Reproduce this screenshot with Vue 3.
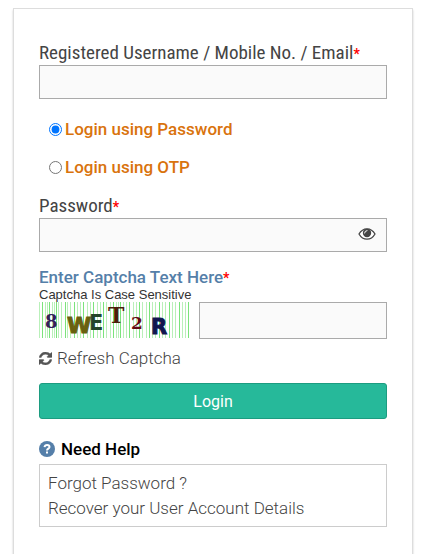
<script setup>
import { ref } from 'vue';

const usuario = ref('');
const modo = ref('password');
const clave = ref('');
const verClave = ref(false);
const captcha = ref('');

const modos = [
    { valor: 'password', texto: 'Login using Password' },
    { valor: 'otp', texto: 'Login using OTP' }
];

// vertical noise lines behind the captcha letters
const lineas = [
    0, 3, 6, 8, 10, 13, 15, 17, 19, 22, 26, 28, 31, 35, 38, 41, 44, 48, 51, 54, 58, 61, 64, 67, 71, 74,
    77, 79, 81, 84, 87, 90, 94, 97, 100, 103, 107, 110, 113, 116, 120, 123, 126, 130, 133, 136, 140, 143, 146, 149
];

const colorLinea = (index) => {
    return index % 3 === 1 ? '#7be37b' : '#b9f0b9';
};

const refrescar = () => {
    captcha.value = '';
};
</script>

<template>
    <main class="pagina">
        <form class="tarjeta" @submit.prevent>
            <div class="campo">
                <label for="usuario" class="etiqueta">Registered Username / Mobile No. / Email<span class="req">*</span></label>
                <input id="usuario" type="text" class="caja" v-model="usuario">
            </div>

            <div class="modos">
                <label v-for="m in modos" :key="m.valor" class="modo">
                    <input type="radio" name="modo" :value="m.valor" v-model="modo">
                    <span>{{ m.texto }}</span>
                </label>
            </div>

            <div class="campo">
                <label for="clave" class="etiqueta">Password<span class="req">*</span></label>
                <div class="clave">
                    <input id="clave" :type="verClave ? 'text' : 'password'" class="caja" v-model="clave">
                    <button type="button" class="ojo" aria-label="Show password" @click="verClave = !verClave">
                        <svg width="18" height="14" viewBox="0 0 18 14">
                            <path d="M1 7C3 3.500 5.800 1.800 9 1.800S15 3.500 17 7C15 10.500 12.200 12.200 9 12.200S3 10.500 1 7Z" fill="#fff" stroke="#444" stroke-width="1.300" />
                            <circle cx="9" cy="6" r="4.200" fill="#444" />
                            <path d="M6.600 6A2.500 2.500 0 0 1 9 3.600" fill="none" stroke="#fff" stroke-width="1" stroke-linecap="round" />
                        </svg>
                    </button>
                </div>
            </div>

            <div class="captcha">
                <label for="captcha" class="titulo">Enter Captcha Text Here<span class="req">*</span></label>
                <div class="nota">Captcha Is Case Sensitive</div>
                <div class="fila">
                    <svg class="imagen" width="150" height="36" viewBox="0 0 150 36">
                        <rect v-for="(x, index) in lineas" :key="x" :x="x" y="0" width="1" height="36" :fill="colorLinea(index)" />
                        <g font-weight="bold">
                            <text x="6" y="26" font-size="18" font-family="DejaVu Serif, serif" fill="#33205c">8</text>
                            <text x="28" y="31" font-size="22" font-family="DejaVu Sans, sans-serif" fill="#69600f" stroke="#69600f">W</text>
                            <text x="50" y="28" font-size="21" font-family="DejaVu Sans, sans-serif" fill="#24452c">E</text>
                            <text x="69" y="21" font-size="22" font-family="DejaVu Serif, serif" fill="#4c1d0b">T</text>
                            <text x="92" y="27" font-size="17" font-family="DejaVu Serif, serif" fill="#650b12">2</text>
                            <text x="112" y="32" font-size="21" font-family="DejaVu Sans, sans-serif" fill="#11164f" stroke="#11164f">R</text>
                        </g>
                    </svg>
                    <input id="captcha" type="text" class="caja" v-model="captcha">
                </div>
                <a href="#" class="refrescar" @click.prevent="refrescar">
                    <svg width="13" height="13" viewBox="0 0 1536 1536">
                        <path fill="#555" stroke="#555" stroke-width="50" d="M1511 928q0 5-1 7-64 268-268 434.500T764 1536q-146 0-282.500-55T238 1324l-129 129q-19 19-45 19t-45-19-19-45V960q0-26 19-45t45-19h448q26 0 45 19t19 45-19 45l-137 137q71 66 161 102t187 36q134 0 250-65t186-179q11-17 53-117 8-23 30-23h192q13 0 22.500 9.500t9.500 22.500zM1536 128v448q0 26-19 45t-45 19h-448q-26 0-45-19t-19-45 19-45l138-138Q969 256 768 256q-134 0-250 65T332 500q-11 17-53 117-8 23-30 23H50q-13 0-22.500-9.500T18 608v-7q65-268 270-434.500T768 0q146 0 284 55.500T1297 212l130-129q19-19 45-19t45 19 19 45z" />
                    </svg>
                    <span>Refresh Captcha</span>
                </a>
            </div>

            <button type="submit" class="entrar">Login</button>

            <h2 class="ayuda">
                <svg width="16" height="16" viewBox="0 0 16 16">
                    <circle cx="8" cy="8" r="8" fill="#557fa9" />
                    <path d="M5.500 6.100C5.800 4.400 7 3.900 8.100 3.900C9.500 3.900 10.500 4.700 10.500 5.900C10.500 7.700 8 7.600 8 9.500" fill="none" stroke="#fff" stroke-width="2" />
                    <rect x="7" y="10.500" width="2" height="2" fill="#fff" />
                </svg>
                <span>Need Help</span>
            </h2>
            <nav class="enlaces">
                <a href="#">Forgot Password ?</a>
                <a href="#">Recover your User Account Details</a>
            </nav>
        </form>
    </main>
</template>

<style>
body {
    margin: 0;
    background: #fff;
}
</style>

<style scoped>
* {
    box-sizing: border-box;
}

.pagina {
    padding: 8px 33px 0 13px;
    font-family: Roboto, "Liberation Sans", sans-serif;
}

.tarjeta {
    min-height: calc(100vh - 8px);
    padding: 32px 25px 27px;
    border: 1px solid #ddd;
    border-bottom: 0;
    box-shadow: 0 2px 2px #ccc;
}

.campo {
    display: flex;
    flex-direction: column;
}

.etiqueta {
    font-family: "Roboto Condensed", Roboto, sans-serif;
    font-size: 19px;
    line-height: 24px;
    color: #444;
}

.req {
    font-family: Roboto, sans-serif;
    font-size: 14px;
    line-height: 1;
    font-weight: 700;
    color: #f00;
}

.caja {
    width: 100%;
    height: 34px;
    padding: 0 10px;
    border: 1px solid #aaa;
    border-radius: 0;
    background: #fafafa;
    font-size: 16px;
    outline: none;
}

.modos {
    display: flex;
    flex-direction: column;
    gap: 14px;
    padding: 18px 10px 15px;
}

.modo {
    display: flex;
    align-items: center;
    gap: 3px;
    font-size: 17px;
    line-height: 24px;
    font-weight: 500;
    color: #d9730d;
}

.modo input {
    width: 13px;
    height: 13px;
    margin: 0;
}

.clave {
    position: relative;
}

.clave .caja {
    display: block;
    padding-right: 40px;
}

.ojo {
    position: absolute;
    top: 0;
    right: 11px;
    height: 32px;
    padding: 0;
    border: 0;
    background: none;
    cursor: pointer;
}

.ojo svg {
    display: block;
}

.captcha {
    padding: 15px 0;
}

.titulo {
    display: block;
    font-size: 17px;
    line-height: 20px;
    font-weight: 500;
    color: #557fa9;
}

.nota {
    font-family: "Liberation Sans", Arial, sans-serif;
    font-size: 13px;
    line-height: 15px;
    color: #333;
}

.fila {
    display: flex;
    gap: 10px;
    align-items: flex-start;
}

.imagen {
    flex: none;
}

.fila .caja {
    height: 37px;
}

.refrescar {
    display: flex;
    align-items: center;
    gap: 5px;
    margin-top: 9px;
    font-size: 17px;
    line-height: 20px;
    font-weight: 300;
    color: #444;
    text-decoration: none;
}

.entrar {
    width: 100%;
    height: 36px;
    border: 1px solid #1c9c80;
    border-radius: 3px;
    background: #26b99a;
    font-family: inherit;
    font-size: 16px;
    color: #fff;
    cursor: pointer;
}

.ayuda {
    display: flex;
    align-items: center;
    gap: 6px;
    margin: 20px 0 5px;
    font-size: 17px;
    line-height: 20px;
    font-weight: 500;
    color: #000;
}

.enlaces {
    display: flex;
    flex-direction: column;
    padding: 6px 8px 5px;
    border: 1px solid #ccc;
}

.enlaces a {
    font-size: 17px;
    line-height: 25px;
    font-weight: 300;
    color: #444;
    text-decoration: none;
}
</style>
